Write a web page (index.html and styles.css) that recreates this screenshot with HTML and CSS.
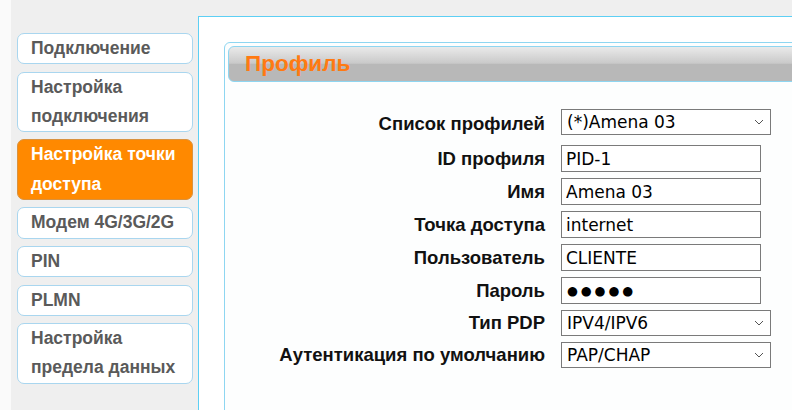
FILE: index.html
```html
<!DOCTYPE html>
<html lang="ru">
<head>
<meta charset="utf-8">
<title>Профиль</title>
<link rel="stylesheet" href="styles.css">
</head>
<body>
<div class="page">
  <div class="shell">
    <nav class="sidebar">
      <a class="nav-item">Подключение</a>
      <a class="nav-item">Настройка подключения</a>
      <a class="nav-item active">Настройка точки доступа</a>
      <a class="nav-item">Модем 4G/3G/2G</a>
      <a class="nav-item">PIN</a>
      <a class="nav-item">PLMN</a>
      <a class="nav-item">Настройка предела данных</a>
    </nav>
    <main class="content">
      <section class="box">
        <h2 class="box-title">Профиль</h2>
        <form class="form">
          <label class="label">Список профилей</label>
          <div class="select-wrap first">
            <select class="select"><option>(*)Amena 03</option></select>
            <svg class="chev" width="10" height="6" viewBox="0 0 10 6"><polyline points="1,1 5,5 9,1" fill="none" stroke="#555" stroke-width="1"/></svg>
          </div>

          <label class="label">ID профиля</label>
          <input class="input" type="text" value="PID-1">

          <label class="label">Имя</label>
          <input class="input" type="text" value="Amena 03">

          <label class="label">Точка доступа</label>
          <input class="input" type="text" value="internet">

          <label class="label">Пользователь</label>
          <input class="input" type="text" value="CLIENTE">

          <label class="label">Пароль</label>
          <input class="input masked" type="text" value="●●●●●">

          <label class="label">Тип PDP</label>
          <div class="select-wrap">
            <select class="select"><option>IPV4/IPV6</option></select>
            <svg class="chev" width="10" height="6" viewBox="0 0 10 6"><polyline points="1,1 5,5 9,1" fill="none" stroke="#555" stroke-width="1"/></svg>
          </div>

          <label class="label">Аутентикация по умолчанию</label>
          <div class="select-wrap">
            <select class="select"><option>PAP/CHAP</option></select>
            <svg class="chev" width="10" height="6" viewBox="0 0 10 6"><polyline points="1,1 5,5 9,1" fill="none" stroke="#555" stroke-width="1"/></svg>
          </div>
        </form>
      </section>
    </main>
  </div>
</div>
</body>
</html>
```
FILE: styles.css
```css
html, body {
  margin: 0;
  padding: 0;
  background: #fafafa;
  overflow: hidden;
}

.page {
  height: 410px;
  padding-left: 11px;
  display: flex;
}

.shell {
  flex: 1;
  display: flex;
  background: #efefef;
  padding-top: 16px;
  min-width: 0;
}

/* left navigation */
.sidebar {
  width: 176px;
  flex: none;
  padding: 17px 5px 0 6px;
  display: flex;
  flex-direction: column;
  gap: 7.3px;
}

.nav-item {
  display: block;
  background: #fff;
  border: 1px solid #a9d6ef;
  border-radius: 7px;
  padding: 0 6px 0 13px;
  font: bold 17.5px/29.3px "Liberation Sans", Arial, sans-serif;
  color: #5a5a5a;
}

.nav-item.active {
  background: #ff8900;
  border-color: #d9923f;
  color: #fff;
}

/* main panel */
.content {
  flex: 1;
  min-width: 0;
  background: #fff;
  border-top: 1px solid #5dcff4;
  border-left: 1px solid #5dcff4;
  padding: 25px 0 0 25px;
  overflow: hidden;
}

.box {
  width: 700px;
  height: 400px;
  border: 1px solid #8ed6f1;
  border-radius: 6px;
  background: #fdfefe;
  padding: 3px;
}

.box-title {
  margin: 0;
  height: 34px;
  border: 1px solid #8ed6f1;
  border-radius: 6px;
  background: linear-gradient(#eaeaea 0%, #c9c9c9 48%, #b8b8b8 50%, #b8b8b8 100%);
  padding-left: 16px;
  font: bold 22.5px/34px "Liberation Sans", Arial, sans-serif;
  color: #ff7a12;
}

.form {
  display: grid;
  grid-template-columns: 317px 210px;
  column-gap: 16px;
  row-gap: 6px;
  margin-top: 27px;
  align-items: center;
}

.label {
  text-align: right;
  font: bold 18.5px "Liberation Sans", Arial, sans-serif;
  color: #111;
  white-space: nowrap;
}

.input {
  box-sizing: border-box;
  width: 200px;
  height: 27px;
  margin: 0;
  border: 1px solid #7a7a7a;
  border-radius: 0;
  padding: 0 4px;
  background: #fff;
  font: 17px "DejaVu Sans", sans-serif;
  color: #000;
  outline: none;
}

/* password bullets: smaller dots, evenly spaced */
.input.masked {
  font-size: 12.5px;
  letter-spacing: 2.9px;
  padding-left: 5px;
}

.select-wrap {
  position: relative;
  width: 210px;
  height: 26px;
}

.select-wrap.first {
  margin-bottom: 4px;
}

.select {
  appearance: none;
  -webkit-appearance: none;
  box-sizing: border-box;
  width: 210px;
  height: 26px;
  margin: 0;
  border: 1px solid #7a7a7a;
  border-radius: 0;
  padding: 0 24px 0 5px;
  background: #fff;
  font: 17px "DejaVu Sans", sans-serif;
  color: #000;
}

.chev {
  position: absolute;
  right: 7px;
  top: 10px;
  pointer-events: none;
}
```
